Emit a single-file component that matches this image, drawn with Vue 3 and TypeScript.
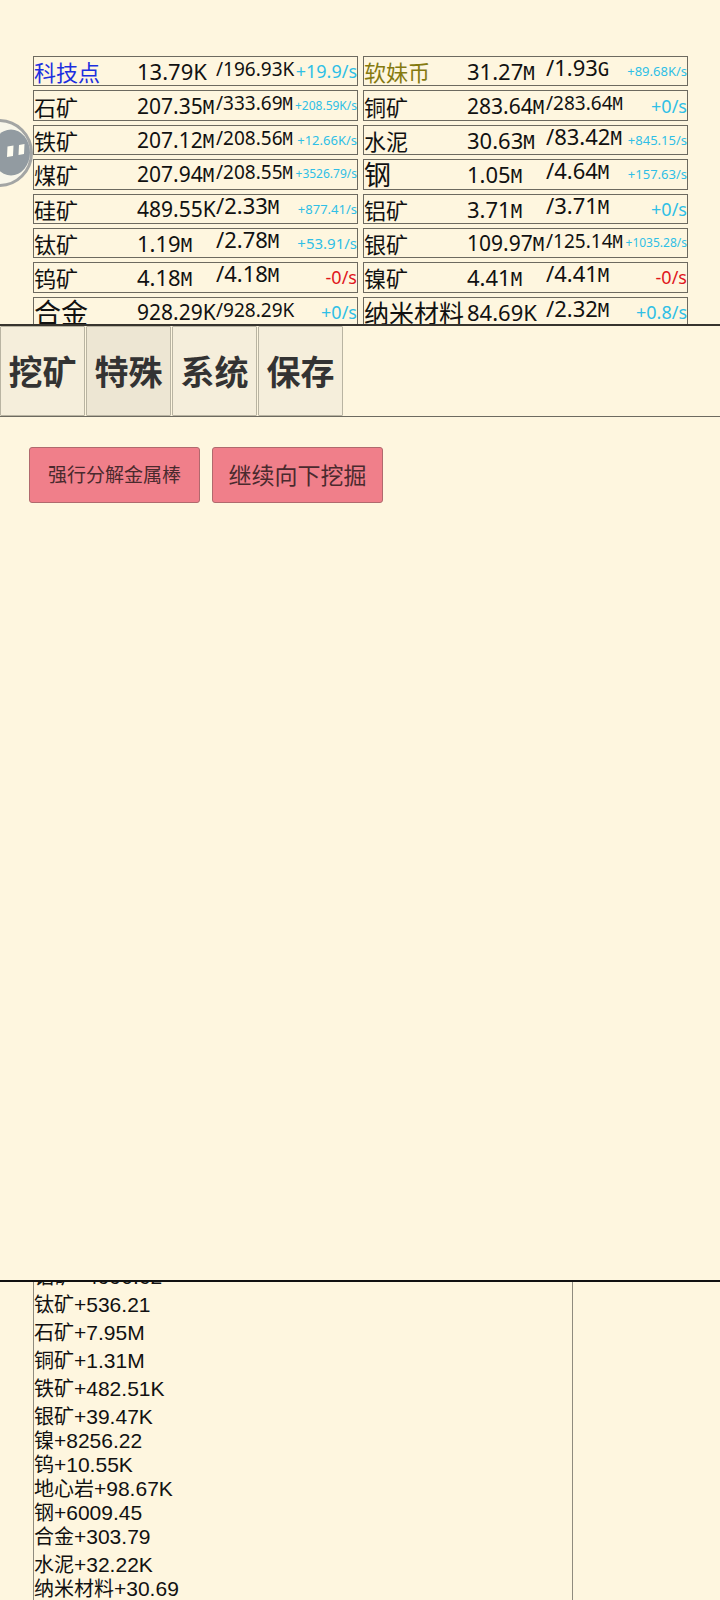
<script setup lang="ts">
interface Resource {
  name: string
  value: string
  max: string
  rate: string
  rateSize: 'r18' | 'r15' | 'r13' | 'r12'
  tone?: 'blue' | 'olive'
  nameSize?: 'n27' | 'n25'
  negative?: boolean
}

const resources: Resource[] = [
  { name: '科技点', value: '13.79K', max: '196.93K', rate: '+19.9/s', rateSize: 'r18', tone: 'blue' },
  { name: '软妹币', value: '31.27M', max: '1.93G', rate: '+89.68K/s', rateSize: 'r13', tone: 'olive' },
  { name: '石矿', value: '207.35M', max: '333.69M', rate: '+208.59K/s', rateSize: 'r12' },
  { name: '铜矿', value: '283.64M', max: '283.64M', rate: '+0/s', rateSize: 'r18' },
  { name: '铁矿', value: '207.12M', max: '208.56M', rate: '+12.66K/s', rateSize: 'r13' },
  { name: '水泥', value: '30.63M', max: '83.42M', rate: '+845.15/s', rateSize: 'r13' },
  { name: '煤矿', value: '207.94M', max: '208.55M', rate: '+3526.79/s', rateSize: 'r12' },
  { name: '钢', value: '1.05M', max: '4.64M', rate: '+157.63/s', rateSize: 'r13', nameSize: 'n27' },
  { name: '硅矿', value: '489.55K', max: '2.33M', rate: '+877.41/s', rateSize: 'r13' },
  { name: '铝矿', value: '3.71M', max: '3.71M', rate: '+0/s', rateSize: 'r18' },
  { name: '钛矿', value: '1.19M', max: '2.78M', rate: '+53.91/s', rateSize: 'r15' },
  { name: '银矿', value: '109.97M', max: '125.14M', rate: '+1035.28/s', rateSize: 'r12' },
  { name: '钨矿', value: '4.18M', max: '4.18M', rate: '-0/s', rateSize: 'r18', negative: true },
  { name: '镍矿', value: '4.41M', max: '4.41M', rate: '-0/s', rateSize: 'r18', negative: true },
  { name: '合金', value: '928.29K', max: '928.29K', rate: '+0/s', rateSize: 'r18', nameSize: 'n27' },
  { name: '纳米材料', value: '84.69K', max: '2.32M', rate: '+0.8/s', rateSize: 'r18', nameSize: 'n25' },
]

const tabs: string[] = ['挖矿', '特殊', '系统', '保存']
const activeTab = '特殊'

const log: { name: string; amount: string; tall?: boolean }[] = [
  { name: '铝矿', amount: '+4990.62', tall: true },
  { name: '钛矿', amount: '+536.21', tall: true },
  { name: '石矿', amount: '+7.95M', tall: true },
  { name: '铜矿', amount: '+1.31M', tall: true },
  { name: '铁矿', amount: '+482.51K', tall: true },
  { name: '银矿', amount: '+39.47K', tall: true },
  { name: '镍', amount: '+8256.22' },
  { name: '钨', amount: '+10.55K' },
  { name: '地心岩', amount: '+98.67K' },
  { name: '钢', amount: '+6009.45' },
  { name: '合金', amount: '+303.79' },
  { name: '水泥', amount: '+32.22K', tall: true },
  { name: '纳米材料', amount: '+30.69' },
]

const digits = (s: string): string => s.replace(/[MG]$/, '')
const unit = (s: string): string => (/[MG]$/.test(s) ? s.slice(-1) : '')
</script>

<template>
  <div class="game">
    <header class="stock">
      <ul class="resources">
        <li v-for="r in resources" :key="r.name" class="resource">
          <span class="name" :class="[r.tone, r.nameSize]">{{ r.name }}</span>
          <span class="value" :class="{ long: r.value.length > 6 }">{{ digits(r.value) }}<span class="unit">{{ unit(r.value) }}</span></span>
          <span class="max" :class="{ long: r.max.length > 6 }">/{{ digits(r.max) }}<span class="unit">{{ unit(r.max) }}</span></span>
          <span class="rate" :class="[r.rateSize, { negative: r.negative }]">{{ r.rate }}</span>
        </li>
      </ul>
    </header>

    <nav class="tabs">
      <button v-for="t in tabs" :key="t" type="button" class="tab" :class="{ active: t === activeTab }">{{ t }}</button>
    </nav>

    <main class="actions">
      <button type="button" class="action small">强行分解金属棒</button>
      <button type="button" class="action">继续向下挖掘</button>
    </main>

    <footer class="bottom">
      <ol class="log">
        <li v-for="l in log" :key="l.name" :class="{ tall: l.tall }"><span class="item">{{ l.name }}</span>{{ l.amount }}</li>
      </ol>
    </footer>

    <button type="button" class="float" aria-label="menu">
      <svg width="34" height="70" viewBox="0 0 34 70" aria-hidden="true">
        <circle cx="-1" cy="34" r="32.500" fill="#f8f6ea" stroke="#a3a5a4" stroke-width="3" />
        <ellipse cx="11" cy="33.500" rx="19" ry="23" fill="#929ba1" />
        <path d="M7.500 27.500l6-1-.5 10.500-6 1zM19 26l5.500-1-.5 10-5.500 1z" fill="#fffdf0" />
      </svg>
    </button>
  </div>
</template>

<style>
body {
  background: #fef6df;
}
</style>

<style scoped>
.game {
  position: relative;
  display: flex;
  flex-direction: column;
  height: 100vh;
  overflow: hidden;
  background: #fef6df;
  color: #111;
  font-family: "Noto Sans", "Noto Sans CJK SC", sans-serif;
}
ul, ol {
  margin: 0;
  padding: 0;
  list-style: none;
}
.stock {
  flex: none;
  box-sizing: border-box;
  height: 326px;
  padding: 56px 32px 0 33px;
  overflow: hidden;
  border-bottom: 2px solid #37342e;
}
.resources {
  display: grid;
  grid-template-columns: 1fr 1fr;
  grid-template-rows: repeat(8, 1fr);
  gap: 4px 5px;
  height: 271px;
}
.resource {
  display: grid;
  grid-template-areas: "name value rest";
  grid-template-columns: 103px 79px 1fr;
  align-items: center;
  min-height: 0;
  border: 1px solid #6d6a60;
  line-height: 28px;
  white-space: nowrap;
}
.name {
  grid-area: name;
  font-family: "Noto Sans CJK SC", sans-serif;
  font-size: 22px;
}
.n27 {
  font-size: 27px;
}
.n25 {
  font-size: 25px;
}
.blue {
  color: #1c2fe0;
}
.olive {
  color: #857a10;
}
.value {
  grid-area: value;
  font-size: 22px;
}
.value.long {
  font-size: 21px;
}
.max {
  grid-area: rest;
  align-self: start;
  font-size: 22px;
  line-height: 21px;
}
.max.long {
  font-size: 19px;
  line-height: 24px;
}
.unit {
  font-family: "DejaVu Sans Mono", monospace;
  font-size: 19px;
  line-height: 1;
}
.max.long .unit {
  font-size: 17px;
}
.rate {
  grid-area: rest;
  justify-self: end;
  color: #2fbfe6;
}
.r18 {
  font-size: 18px;
}
.r15 {
  font-size: 15px;
}
.r13 {
  font-size: 13px;
}
.r12 {
  font-size: 12px;
}
.negative {
  color: #e0161c;
}
.tabs {
  display: flex;
  flex: none;
  gap: 1px;
  height: 90px;
  border-bottom: 1px solid #6d6a60;
}
.tab {
  width: 85px;
  padding: 0 0 2px;
  border: 1px solid #b9b4a2;
  border-radius: 1px;
  background: #f5eedb;
  color: #333;
  font: 700 34px "Noto Sans CJK SC", sans-serif;
}
.tab.active {
  background: #ede6d3;
}
.actions {
  display: flex;
  flex: 1;
  align-items: flex-start;
  gap: 12px;
  padding: 30px 29px 0;
}
.action {
  width: 171px;
  height: 56px;
  padding: 0 0 3px;
  border: 1px solid #b0696d;
  border-radius: 3px;
  background: #f07f8a;
  color: #4a2a2e;
  font: 23px "Noto Sans CJK SC", sans-serif;
}
.action.small {
  font-size: 19px;
}
.bottom {
  display: flex;
  flex: none;
  box-sizing: border-box;
  height: 20vh;
  padding-left: 33px;
  border-top: 2px solid #111;
}
.log {
  display: flex;
  flex-direction: column;
  justify-content: flex-end;
  box-sizing: border-box;
  width: 540px;
  overflow: hidden;
  border: 1px solid #8f8b7e;
  border-width: 0 1px;
  font-family: "Liberation Sans", "Noto Sans CJK SC", sans-serif;
  font-size: 21px;
  line-height: 26px;
}
.log li {
  flex: none;
  height: 24px;
}
.log .tall {
  padding-top: 4px;
}
.item {
  font-size: 20px;
}
.float {
  position: absolute;
  left: 0;
  top: 119px;
  padding: 0;
  border: 0;
  background: none;
}
.float svg {
  display: block;
}
</style>
